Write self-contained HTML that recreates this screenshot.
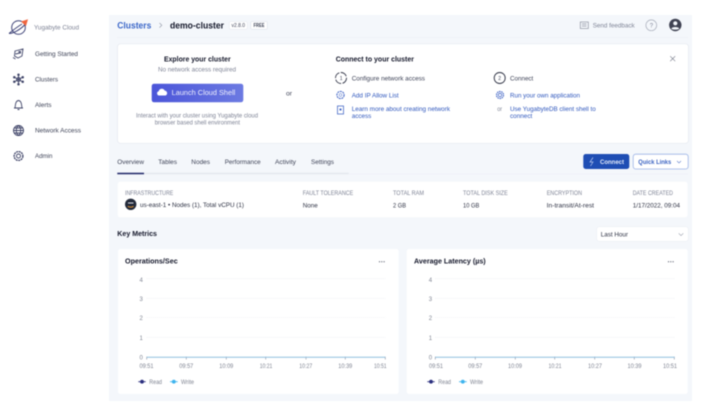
<!DOCTYPE html>
<html><head><meta charset="utf-8"><title>Clusters - demo-cluster</title>
<style>
html,body{margin:0;padding:0;background:#fff;width:716px;height:405px;overflow:hidden}
svg{display:block;filter:blur(.5px)}
text{font-family:"Liberation Sans",sans-serif;font-size:6.5px;fill:#3f4458}
.b{font-weight:700;fill:#14172a}
.g{fill:#7f8496}
.l{fill:#2f57bd}
.lab{fill:#7f8496;font-size:6px}
.v{fill:#2e3244}
.ax{fill:#7f8492;font-size:6px}
.grid{stroke:#e6e8ee;stroke-width:.6;stroke-dasharray:1 1}
</style></head><body>
<svg width="716" height="405" viewBox="0 0 716 405" xmlns="http://www.w3.org/2000/svg">
<defs><linearGradient id="bt" x1="0" x2="1" y1="0" y2="0"><stop offset="0" stop-color="#4b55d9"/><stop offset="1" stop-color="#6c7ae2"/></linearGradient></defs>
<rect x="109" y="15" width="583" height="386" fill="#f4f7fb"/>

<!-- sidebar -->
<g fill="none" stroke="#3f4478" stroke-width="1">
<circle cx="18.500" cy="27.500" r="6.800"/>
<path d="M9 33.500 C13 33.500 20 30 25 24.500 M9 33.500 C12 31 17 27 22 24"/>
</g>
<path d="M21 21.500 L28 19.300 L26 26 Z" fill="#f0653e"/>
<text x="34" y="29.500" textLength="45" lengthAdjust="spacingAndGlyphs" class="g">Yugabyte Cloud</text>
<g fill="none" stroke="#3f4468" stroke-width=".9">
<path d="M15 51 L23 49 L22 56 L18 58 L14.500 56 Z M15.500 54 L20 53 M13 57.500 L15.500 59 M19 51.500h1.500v1.500h-1.500z"/>
<circle cx="18.500" cy="79.500" r="2"/><path d="M18.500 74.500V84.500M14 77L23 82M23 77L14 82"/>
<circle cx="18.500" cy="74.800" r=".8"/><circle cx="18.500" cy="84.200" r=".8"/><circle cx="14.300" cy="77.200" r=".8"/><circle cx="22.700" cy="77.200" r=".8"/><circle cx="14.300" cy="81.800" r=".8"/><circle cx="22.700" cy="81.800" r=".8"/>
<path d="M15 108C15.500 106 15 101 18.500 100.500C22 101 21.500 106 22 108ZM14 108H23M17.500 109.500H19.500"/>
<circle cx="18.500" cy="130.500" r="5"/><path d="M13.500 130.500H23.500M14.500 128H22.500M14.500 133H22.500M18.500 125.500C15.500 128 15.500 133 18.500 135.500M18.500 125.500C21.500 128 21.500 133 18.500 135.500"/>
<circle cx="18.500" cy="156" r="2"/><circle cx="18.500" cy="156" r="4.400" stroke-dasharray="2 .6" stroke-width="1.300"/>
</g>
<text x="35" y="56" textLength="43" lengthAdjust="spacingAndGlyphs">Getting Started</text>
<text x="35" y="81.500" textLength="23" lengthAdjust="spacingAndGlyphs">Clusters</text>
<text x="35" y="107" textLength="16.500" lengthAdjust="spacingAndGlyphs">Alerts</text>
<text x="35" y="132.500" textLength="46" lengthAdjust="spacingAndGlyphs">Network Access</text>
<text x="35" y="158" textLength="17.500" lengthAdjust="spacingAndGlyphs">Admin</text>

<!-- header -->
<text x="117.300" y="28.500" textLength="34" lengthAdjust="spacingAndGlyphs" style="font-size:9.500px;font-weight:700;fill:#3a66c8">Clusters</text>
<path d="M159.500 23 L161.800 25.300 L159.500 27.600" fill="none" stroke="#9aa0ae" stroke-width=".7"/>
<text x="170" y="28.500" textLength="54" lengthAdjust="spacingAndGlyphs" class="b" style="font-size:9.500px">demo-cluster</text>
<rect x="229.300" y="21.500" width="18" height="7.800" rx="1.500" fill="#fff" stroke="#e4e7ee" stroke-width=".5"/>
<text x="231.500" y="27.200" textLength="13.500" lengthAdjust="spacingAndGlyphs" style="font-size:5px">v2.8.0</text>
<rect x="250.800" y="21.500" width="16.500" height="7.800" rx="1" fill="#fff" stroke="#d8dce6" stroke-width=".5"/>
<text x="253.500" y="27.200" textLength="11" lengthAdjust="spacingAndGlyphs" style="font-size:5px;font-weight:700">FREE</text>
<line x1="117" y1="37.500" x2="688" y2="37.500" stroke="#eef1f6" stroke-width=".8"/>
<g fill="none" stroke="#8f94a2" stroke-width=".7">
<rect x="580.300" y="22" width="8" height="6.500"/><path d="M582 24H586.500M582 26H586.500"/>
<circle cx="651.300" cy="25.300" r="5.400" stroke="#a8adba"/>
</g>
<text x="592.700" y="27.300" textLength="42" lengthAdjust="spacingAndGlyphs" class="g">Send feedback</text>
<text x="649.700" y="27.500" style="font-size:6px" class="g">?</text>
<circle cx="675.300" cy="25" r="6.200" fill="#3f4252"/>
<circle cx="675.300" cy="23.300" r="2.100" fill="#f4f7fb"/>
<path d="M671.300 28.600C672.500 26.500 678 26.500 679.300 28.600C678 30 672.500 30 671.300 28.600Z" fill="#f4f7fb"/>

<!-- banner -->
<rect x="117.500" y="43.800" width="571" height="99.500" rx="3" fill="#fff" stroke="#e5e9f0" stroke-width=".7"/>
<text x="164" y="61.500" textLength="66.700" lengthAdjust="spacingAndGlyphs" class="b" style="font-size:7px">Explore your cluster</text>
<text x="158" y="71.500" textLength="78" lengthAdjust="spacingAndGlyphs" class="g">No network access required</text>
<rect x="151.700" y="83.700" width="91.600" height="18.600" rx="2.500" fill="url(#bt)"/>
<path d="M159 95.500a2.200 2.200 0 0 1 -.3 -4.300a3.200 3.200 0 0 1 6 -.6a2.600 2.600 0 0 1 1 4.900z" fill="#fff"/>
<text x="171.700" y="95" textLength="63.600" lengthAdjust="spacingAndGlyphs" style="font-size:7px;fill:#f0f1fd">Launch Cloud Shell</text>
<text x="136" y="117.300" textLength="122" lengthAdjust="spacingAndGlyphs" class="g">Interact with your cluster using Yugabyte cloud</text>
<text x="154.700" y="124.500" textLength="85.300" lengthAdjust="spacingAndGlyphs" class="g">browser based shell environment</text>
<text x="286" y="95.300" textLength="6" lengthAdjust="spacingAndGlyphs">or</text>
<text x="335.700" y="61.500" textLength="78.300" lengthAdjust="spacingAndGlyphs" class="b" style="font-size:7px">Connect to your cluster</text>
<path d="M670.200 56.200L675.200 61.200M675.200 56.200L670.200 61.200" stroke="#6c7180" stroke-width=".6"/>

<circle cx="341" cy="78" r="5.500" fill="none" stroke="#2e3244" stroke-width=".9" stroke-dasharray="7 1.500"/>
<text x="339.800" y="80" style="font-size:5px">1</text>
<text x="351.700" y="80.300" textLength="73.300" lengthAdjust="spacingAndGlyphs">Configure network access</text>
<circle cx="499.700" cy="78" r="5.500" fill="none" stroke="#2e3244" stroke-width=".9"/>
<text x="498.200" y="80" style="font-size:5px">2</text>
<text x="510" y="80.300" textLength="23.300" lengthAdjust="spacingAndGlyphs">Connect</text>

<circle cx="340.500" cy="95" r="3.600" fill="none" stroke="#4a6cc8" stroke-width="1.100" stroke-dasharray="2 .7"/>
<circle cx="340.500" cy="95" r="1.400" fill="none" stroke="#4a6cc8" stroke-width=".5"/>
<text x="351.700" y="97.500" textLength="47" lengthAdjust="spacingAndGlyphs" class="l">Add IP Allow List</text>
<rect x="337.500" y="106" width="6" height="8" fill="none" stroke="#4a6cc8" stroke-width=".8"/>
<rect x="339.500" y="108.500" width="2" height="2" fill="#4a6cc8"/>
<text x="351.700" y="110.900" textLength="98.300" lengthAdjust="spacingAndGlyphs" class="l">Learn more about creating network</text>
<text x="351.700" y="118.200" textLength="19.600" lengthAdjust="spacingAndGlyphs" class="l">access</text>

<circle cx="500" cy="95" r="1.700" fill="none" stroke="#4a6cc8" stroke-width=".8"/>
<circle cx="500" cy="95" r="3.500" fill="none" stroke="#4a6cc8" stroke-width="1.200" stroke-dasharray="1.500 .7"/>
<text x="510" y="97.500" textLength="70" lengthAdjust="spacingAndGlyphs" class="l">Run your own application</text>
<text x="497.300" y="110.900" textLength="4.800" lengthAdjust="spacingAndGlyphs" class="g">or</text>
<text x="510" y="110.900" textLength="85.700" lengthAdjust="spacingAndGlyphs" class="l">Use YugabyteDB client shell to</text>
<text x="510" y="118.200" textLength="22.300" lengthAdjust="spacingAndGlyphs" class="l">connect</text>

<!-- tabs -->
<line x1="117" y1="173.500" x2="348.700" y2="173.500" stroke="#e4e7ee" stroke-width="1.400"/>
<line x1="348.700" y1="174" x2="688" y2="174" stroke="#eef1f6" stroke-width=".7"/>
<line x1="117.300" y1="173.500" x2="144" y2="173.500" stroke="#1f2668" stroke-width="1.500"/>
<text x="117.300" y="164" textLength="26.700" lengthAdjust="spacingAndGlyphs">Overview</text>
<text x="158.300" y="164" textLength="18.700" lengthAdjust="spacingAndGlyphs">Tables</text>
<text x="191.300" y="164" textLength="18.700" lengthAdjust="spacingAndGlyphs">Nodes</text>
<text x="224.700" y="164" textLength="36" lengthAdjust="spacingAndGlyphs">Performance</text>
<text x="275" y="164" textLength="21" lengthAdjust="spacingAndGlyphs">Activity</text>
<text x="311" y="164" textLength="23" lengthAdjust="spacingAndGlyphs">Settings</text>
<rect x="583.300" y="154" width="46" height="15" rx="2.500" fill="#1f4eb4"/>
<path d="M593 157.500L590 162H593L590.500 166" fill="none" stroke="#b9c8ee" stroke-width=".7"/>
<text x="600" y="163.800" textLength="24" lengthAdjust="spacingAndGlyphs" style="fill:#e4ebfa;font-weight:700">Connect</text>
<rect x="633.200" y="154.200" width="55" height="14.800" rx="2.500" fill="#fff" stroke="#9db4e6" stroke-width=".8"/>
<text x="638.300" y="163.800" textLength="33" lengthAdjust="spacingAndGlyphs" style="fill:#3a62c2;font-weight:700">Quick Links</text>
<path d="M677 161L679 163L681 161" fill="none" stroke="#5f7fca" stroke-width=".6"/>

<!-- info -->
<rect x="117.800" y="181.700" width="569.700" height="35.600" rx="2.500" fill="#fff"/>
<text x="125" y="194.800" textLength="48.300" lengthAdjust="spacingAndGlyphs" class="lab">INFRASTRUCTURE</text>
<text x="302.700" y="194.800" textLength="50.600" lengthAdjust="spacingAndGlyphs" class="lab">FAULT TOLERANCE</text>
<text x="393" y="194.800" textLength="31" lengthAdjust="spacingAndGlyphs" class="lab">TOTAL RAM</text>
<text x="463" y="194.800" textLength="44.700" lengthAdjust="spacingAndGlyphs" class="lab">TOTAL DISK SIZE</text>
<text x="546.700" y="194.800" textLength="35.300" lengthAdjust="spacingAndGlyphs" class="lab">ENCRYPTION</text>
<text x="632.700" y="194.800" textLength="40.300" lengthAdjust="spacingAndGlyphs" class="lab">DATE CREATED</text>
<circle cx="130.700" cy="204.300" r="5.700" fill="#232a3a"/>
<path d="M127.800 206.300Q130.700 208 133.600 206.300" stroke="#f29a2e" stroke-width=".9" fill="none"/>
<path d="M128 203H133.500" stroke="#dfe3ea" stroke-width="1"/>
<text x="140" y="207.200" textLength="104" lengthAdjust="spacingAndGlyphs" class="v">us-east-1 • Nodes (1), Total vCPU (1)</text>
<text x="302.700" y="207.300" textLength="15" lengthAdjust="spacingAndGlyphs" class="v">None</text>
<text x="393" y="207.300" textLength="13" lengthAdjust="spacingAndGlyphs" class="v">2 GB</text>
<text x="463" y="207.300" textLength="16.300" lengthAdjust="spacingAndGlyphs" class="v">10 GB</text>
<text x="546.700" y="207.300" textLength="47.300" lengthAdjust="spacingAndGlyphs" class="v">In-transit/At-rest</text>
<text x="632.700" y="207.300" textLength="47.300" lengthAdjust="spacingAndGlyphs" class="v">1/17/2022, 09:04</text>

<text x="117.300" y="236" textLength="39.700" lengthAdjust="spacingAndGlyphs" class="b" style="font-size:7.500px">Key Metrics</text>
<rect x="596.700" y="226.700" width="91.600" height="14.600" rx="2.500" fill="#fff" stroke="#eceff4" stroke-width=".6"/>
<text x="600.700" y="236.500" textLength="27.300" lengthAdjust="spacingAndGlyphs" class="v">Last Hour</text>
<path d="M678.700 233.300L681 235.600L683.300 233.300" fill="none" stroke="#9ba0ae" stroke-width=".6"/>

<!-- chart 1 -->
<rect x="118" y="249" width="280.700" height="145" rx="2.500" fill="#fff"/>
<text x="125" y="263.300" textLength="52.700" lengthAdjust="spacingAndGlyphs" class="b" style="font-size:7px">Operations/Sec</text>
<g fill="#5a5f70"><circle cx="379.500" cy="261.700" r=".6"/><circle cx="381.800" cy="261.700" r=".6"/><circle cx="384.100" cy="261.700" r=".6"/></g>
<g class="grid"><line x1="146.700" y1="278.700" x2="385.300" y2="278.700"/><line x1="146.700" y1="298.300" x2="385.300" y2="298.300"/><line x1="146.700" y1="317.500" x2="385.300" y2="317.500"/><line x1="146.700" y1="337.300" x2="385.300" y2="337.300"/></g>
<text x="139.500" y="282.200" class="ax">4</text><text x="139.500" y="300.900" class="ax">3</text><text x="139.500" y="320.200" class="ax">2</text><text x="139.500" y="339.900" class="ax">1</text><text x="139.500" y="359.500" class="ax">0</text>
<path d="M146.700 356.700V359.500M186.300 356.700V359.500M226.300 356.700V359.500M265.700 356.700V359.500M306 356.700V359.500M345.300 356.700V359.500M385.300 356.700V359.500" stroke="#6f7688" stroke-width=".5"/>
<line x1="146.700" y1="357.300" x2="385.300" y2="357.300" stroke="#8fbfdf" stroke-width="1"/>
<text x="139.500" y="367.800" textLength="14" lengthAdjust="spacingAndGlyphs" class="ax">09:51</text><text x="179.300" y="367.800" textLength="14" lengthAdjust="spacingAndGlyphs" class="ax">09:57</text><text x="219.300" y="367.800" textLength="14" lengthAdjust="spacingAndGlyphs" class="ax">10:09</text><text x="259.700" y="367.800" textLength="12.600" lengthAdjust="spacingAndGlyphs" class="ax">10:21</text><text x="299.300" y="367.800" textLength="13" lengthAdjust="spacingAndGlyphs" class="ax">10:27</text><text x="338.300" y="367.800" textLength="14" lengthAdjust="spacingAndGlyphs" class="ax">10:39</text><text x="374" y="367.800" textLength="12.500" lengthAdjust="spacingAndGlyphs" class="ax">10:51</text>
<line x1="138.300" y1="381.700" x2="145.700" y2="381.700" stroke="#2b2f7e" stroke-width=".9"/><circle cx="142" cy="381.700" r="1.900" fill="#2b2f7e"/>
<text x="149.300" y="383.800" textLength="12.700" lengthAdjust="spacingAndGlyphs" class="ax">Read</text>
<line x1="170" y1="381.700" x2="177.700" y2="381.700" stroke="#3fb4ee" stroke-width=".9"/><circle cx="173.800" cy="381.700" r="1.900" fill="#3fb4ee"/>
<text x="181" y="383.800" textLength="13" lengthAdjust="spacingAndGlyphs" class="ax">Write</text>

<!-- chart 2 -->
<rect x="406.700" y="249" width="281" height="145" rx="2.500" fill="#fff"/>
<text x="414" y="263.300" textLength="71.700" lengthAdjust="spacingAndGlyphs" class="b" style="font-size:7px">Average Latency (µs)</text>
<g fill="#5a5f70"><circle cx="668.500" cy="261.700" r=".6"/><circle cx="670.800" cy="261.700" r=".6"/><circle cx="673.100" cy="261.700" r=".6"/></g>
<g class="grid"><line x1="435.300" y1="278.700" x2="674.700" y2="278.700"/><line x1="435.300" y1="298.300" x2="674.700" y2="298.300"/><line x1="435.300" y1="317.500" x2="674.700" y2="317.500"/><line x1="435.300" y1="337.300" x2="674.700" y2="337.300"/></g>
<text x="428.800" y="282.200" class="ax">4</text><text x="428.800" y="300.900" class="ax">3</text><text x="428.800" y="320.200" class="ax">2</text><text x="428.800" y="339.900" class="ax">1</text><text x="428.800" y="359.500" class="ax">0</text>
<path d="M435.300 356.700V359.500M475.300 356.700V359.500M515.300 356.700V359.500M554.700 356.700V359.500M594.700 356.700V359.500M634.300 356.700V359.500M674.300 356.700V359.500" stroke="#6f7688" stroke-width=".5"/>
<line x1="435.300" y1="357.300" x2="674.700" y2="357.300" stroke="#8fbfdf" stroke-width="1"/>
<text x="429" y="367.800" textLength="14" lengthAdjust="spacingAndGlyphs" class="ax">09:51</text><text x="468.300" y="367.800" textLength="14" lengthAdjust="spacingAndGlyphs" class="ax">09:57</text><text x="508" y="367.800" textLength="14" lengthAdjust="spacingAndGlyphs" class="ax">10:09</text><text x="548.500" y="367.800" textLength="13" lengthAdjust="spacingAndGlyphs" class="ax">10:21</text><text x="588" y="367.800" textLength="14" lengthAdjust="spacingAndGlyphs" class="ax">10:27</text><text x="627.500" y="367.800" textLength="14" lengthAdjust="spacingAndGlyphs" class="ax">10:39</text><text x="663" y="367.800" textLength="14" lengthAdjust="spacingAndGlyphs" class="ax">10:51</text>
<line x1="427.300" y1="381.700" x2="434.700" y2="381.700" stroke="#2b2f7e" stroke-width=".9"/><circle cx="431" cy="381.700" r="1.900" fill="#2b2f7e"/>
<text x="438.300" y="383.800" textLength="12.700" lengthAdjust="spacingAndGlyphs" class="ax">Read</text>
<line x1="459" y1="381.700" x2="466.700" y2="381.700" stroke="#3fb4ee" stroke-width=".9"/><circle cx="462.800" cy="381.700" r="1.900" fill="#3fb4ee"/>
<text x="470" y="383.800" textLength="13" lengthAdjust="spacingAndGlyphs" class="ax">Write</text>
</svg>
</body></html>
